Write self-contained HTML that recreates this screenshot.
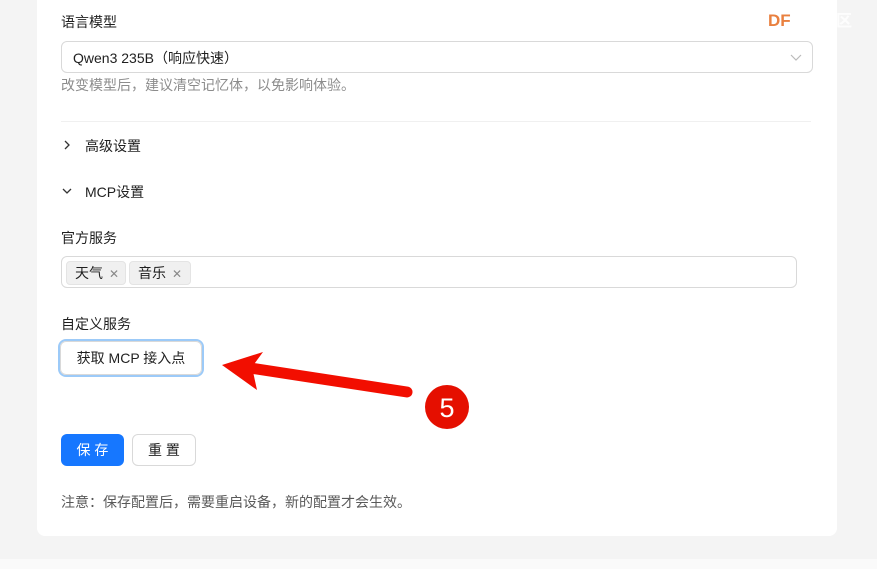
<!DOCTYPE html>
<html><head><meta charset="utf-8"><style>
*{margin:0;padding:0;box-sizing:border-box}
body{width:877px;height:569px;background:#f4f4f4;font-family:"Liberation Sans","Noto Sans CJK SC",sans-serif;position:relative;overflow:hidden;color:#1f1f1f;font-size:14px}
.bot{position:absolute;left:0;top:559px;width:877px;height:10px;background:#fafafa}
.card{position:absolute;left:37px;top:-20px;width:800px;height:556px;background:#fff;border-radius:8px}
.a{position:absolute;white-space:nowrap}
.inp{position:absolute;border:1px solid #d9d9d9;border-radius:6px;background:#fff}
.tag{position:absolute;top:4px;height:24px;background:#f0f0f0;border:1px solid #e4e4e4;border-radius:4px;font-size:14px;line-height:22px;padding-left:8px}
.tag span{color:#888;font-size:12px;margin-left:6px}
.btn{position:absolute;border-radius:6px;text-align:center;font-size:14px}
</style></head><body>
<div class="bot"></div>
<div class="card"></div>
<div class="a" style="left:61px;top:12px">语言模型</div>
<div class="inp" style="left:61px;top:41px;width:752px;height:32px"><div class="a" style="left:11px;top:6px">Qwen3 235B（响应快速）</div>
<svg class="a" style="left:728px;top:10px" width="12" height="10"><path d="M1 3l5 5 5-5" fill="none" stroke="#bbb" stroke-width="1.2"/></svg></div>
<div class="a" style="left:61px;top:75px;color:#8c8c8c">改变模型后，建议清空记忆体，以免影响体验。</div>
<div class="a" style="left:61px;top:121px;width:750px;height:1px;background:#f0f0f0"></div>
<svg class="a" style="left:62px;top:139px" width="10" height="12"><path d="M3 2l4 4-4 4" fill="none" stroke="#333" stroke-width="1.3"/></svg>
<div class="a" style="left:85px;top:136px">高级设置</div>
<svg class="a" style="left:61px;top:186px" width="12" height="10"><path d="M2 3l4 4 4-4" fill="none" stroke="#333" stroke-width="1.3"/></svg>
<div class="a" style="left:85px;top:182px">MCP设置</div>
<div class="a" style="left:61px;top:228px">官方服务</div>
<div class="inp" style="left:61px;top:256px;width:736px;height:32px">
<div class="tag" style="left:4px;width:60px">天气<span>✕</span></div>
<div class="tag" style="left:67px;width:62px">音乐<span>✕</span></div></div>
<div class="a" style="left:61px;top:314px">自定义服务</div>
<div class="btn" style="left:60px;top:341px;width:142px;height:34px;border:1px solid #d9d9d9;box-shadow:0 0 0 2px #9ccaf8;line-height:32px">获取 MCP 接入点</div>
<div class="btn" style="left:61px;top:434px;width:63px;height:32px;background:#1677ff;color:#fff;line-height:32px">保 存</div>
<div class="btn" style="left:132px;top:434px;width:64px;height:32px;border:1px solid #d9d9d9;line-height:30px">重 置</div>
<div class="a" style="left:61px;top:492px;color:#595959">注意：保存配置后，需要重启设备，新的配置才会生效。</div>
<svg class="a" style="left:0;top:0" width="877" height="569">
<line x1="250" y1="368" x2="407" y2="392" stroke="#f20e00" stroke-width="11" stroke-linecap="round"/>
<path d="M222 365L263 352L252 367L257 390Z" fill="#f20e00"/>
<circle cx="447" cy="407" r="22" fill="#e50f00"/>
<text x="447" y="417" font-family="Liberation Sans" font-size="27" fill="#fff" text-anchor="middle">5</text>
<text x="768" y="26" font-family="Liberation Sans" font-weight="bold" font-size="17" fill="#e9803f">DF</text>
<text x="820" y="26" font-family="Noto Sans CJK SC" font-weight="bold" font-size="16" fill="#fff" opacity="0.9">社区</text>
</svg>
</body></html>
